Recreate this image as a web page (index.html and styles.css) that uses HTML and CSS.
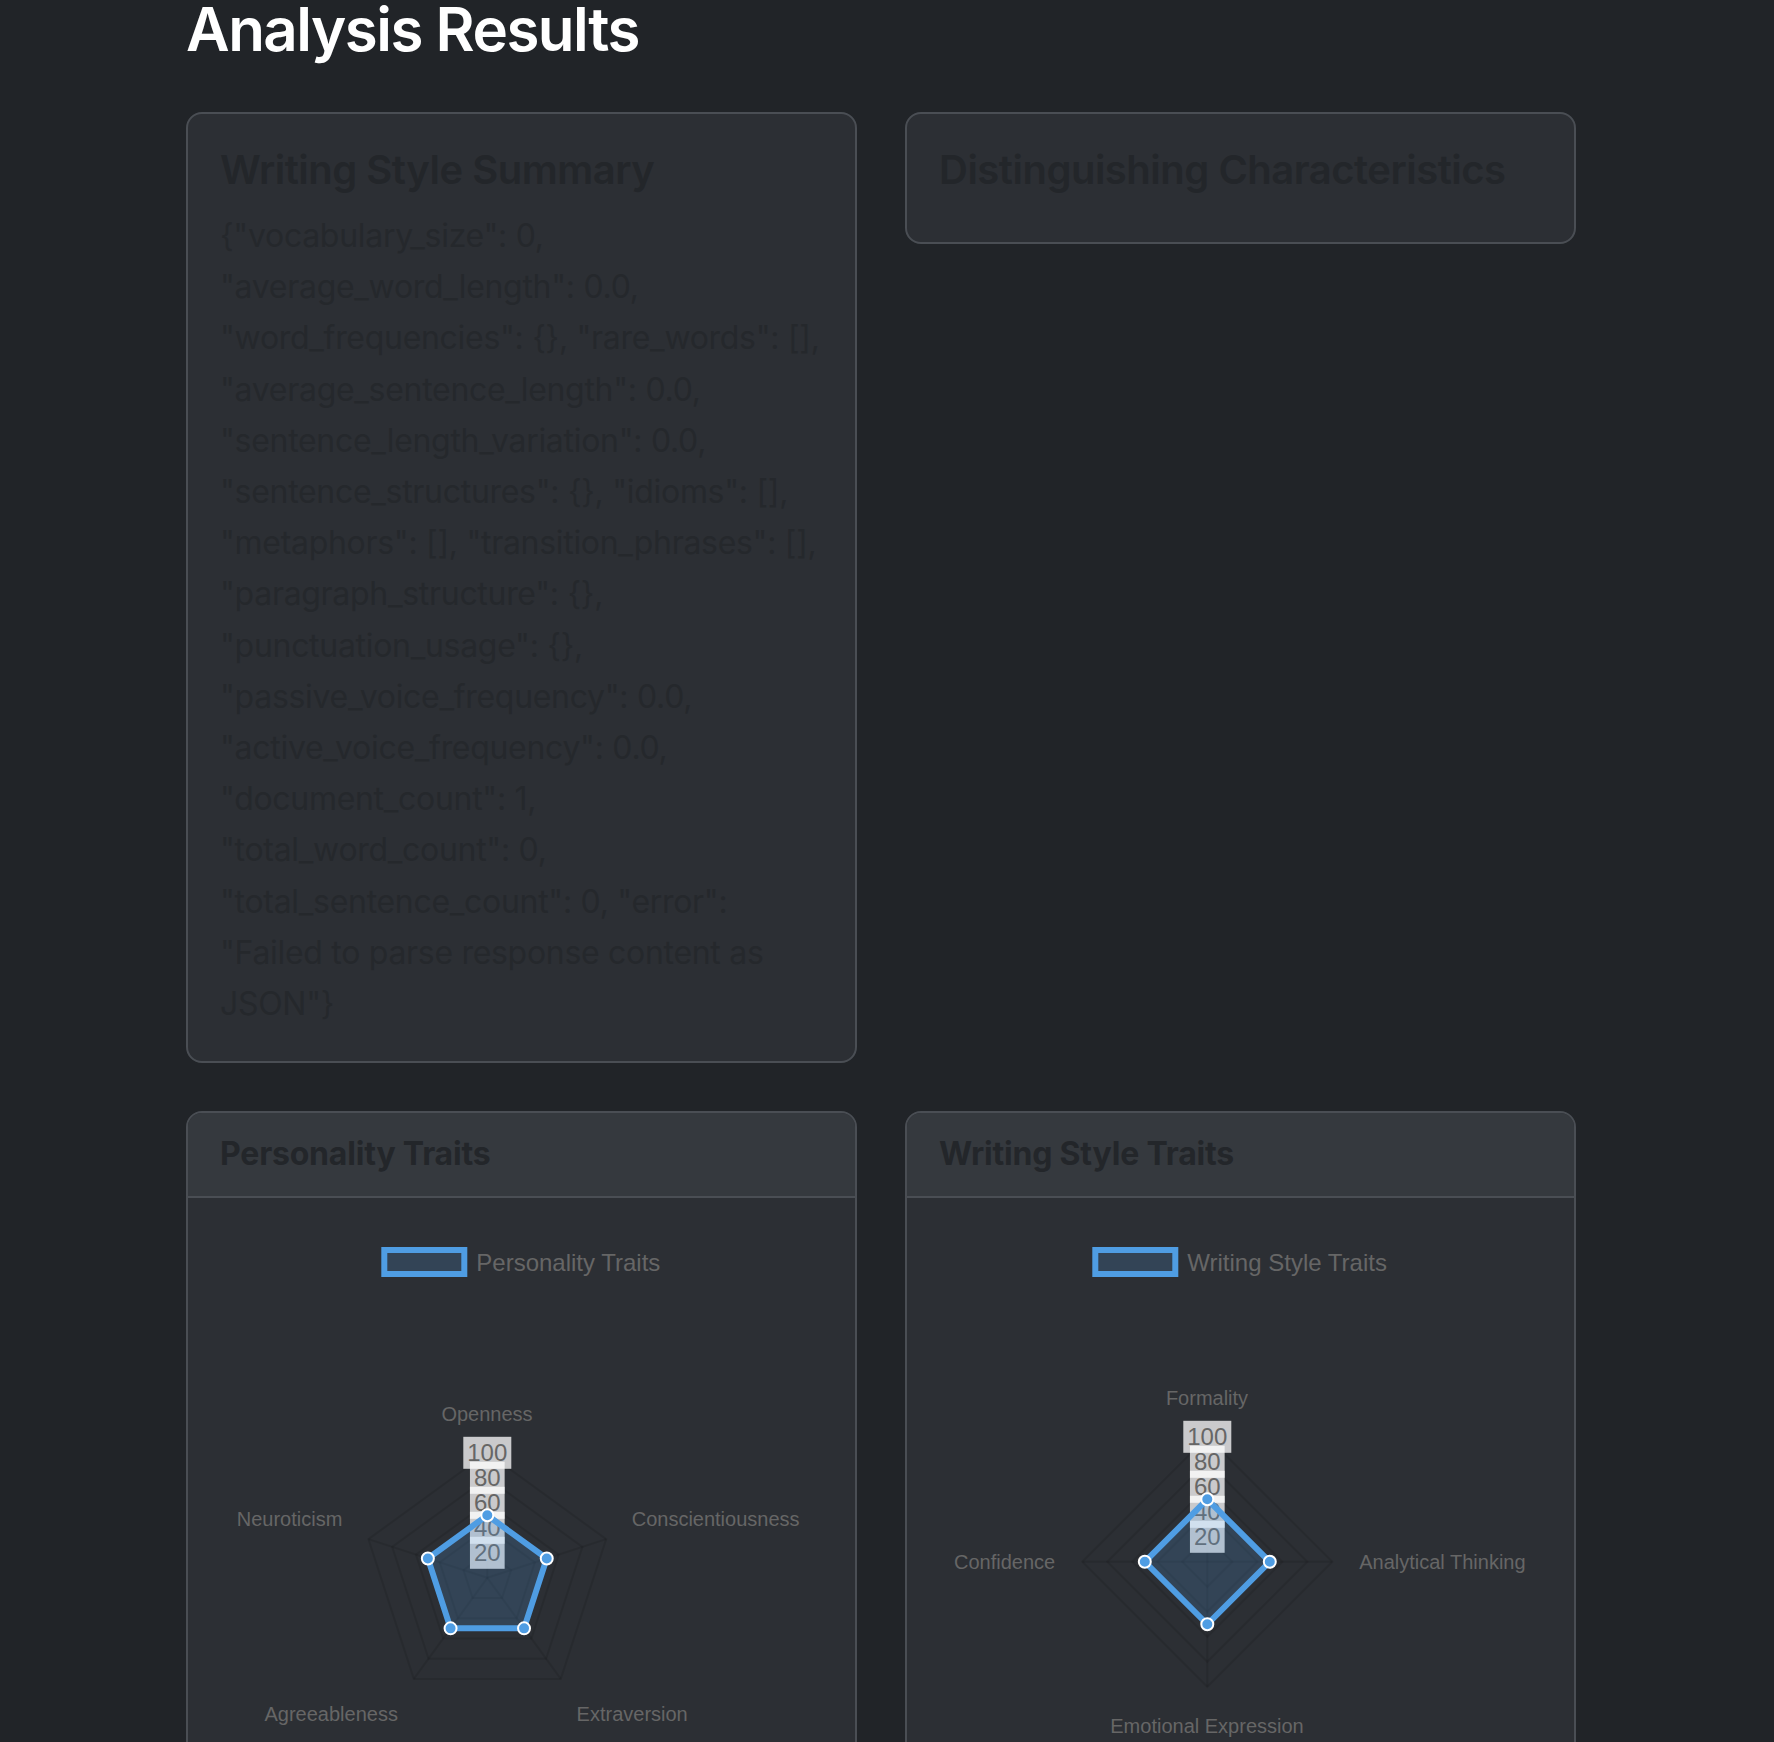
FILE: index.html
```html
<!DOCTYPE html>
<html lang="en">
<head>
<meta charset="utf-8">
<title>Analysis Results</title>
<link rel="stylesheet" href="styles.css">
</head>
<body>
<main class="page">
  <h2 class="page-title">Analysis Results</h2>

  <div class="grid">
    <section class="card">
      <div class="card-body">
        <h3 class="card-title">Writing Style Summary</h3>
        <p class="summary">{"vocabulary_size": 0,<br>"average_word_length": 0.0,<br>"word_frequencies": {}, "rare_words": [],<br>"average_sentence_length": 0.0,<br>"sentence_length_variation": 0.0,<br>"sentence_structures": {}, "idioms": [],<br>"metaphors": [], "transition_phrases": [],<br>"paragraph_structure": {},<br>"punctuation_usage": {},<br>"passive_voice_frequency": 0.0,<br>"active_voice_frequency": 0.0,<br>"document_count": 1,<br>"total_word_count": 0,<br>"total_sentence_count": 0, "error":<br>"Failed to parse response content as<br>JSON"}</p>
      </div>
    </section>

    <section class="card">
      <div class="card-body">
        <h3 class="card-title">Distinguishing Characteristics</h3>
      </div>
    </section>

    <section class="card">
      <header class="card-header"><h4 class="header-title">Personality Traits</h4></header>
      <div class="card-body chart-body">
        <svg class="chart" viewBox="0 0 603 603" width="603" height="603">
          <g class="legend">
            <rect class="legend-box" x="164.3" y="19" width="80" height="24"/>
            <text class="legend-text" x="256.3" y="31">Personality Traits</text>
          </g>
          <g class="grid-lines">
            <polygon points="267.3,321.8 291.08,339.07 282,367.03 252.6,367.03 243.52,339.07"/>
            <polygon points="267.3,296.8 314.85,331.35 296.69,387.25 237.91,387.25 219.75,331.35"/>
            <polygon points="267.3,271.8 338.63,323.62 311.38,407.48 223.22,407.48 195.97,323.62"/>
            <polygon points="267.3,246.8 362.41,315.9 326.08,427.7 208.52,427.7 172.19,315.9"/>
            <polygon points="267.3,221.8 386.18,308.17 340.77,447.93 193.83,447.93 148.42,308.17"/>
            <line x1="267.3" y1="346.8" x2="267.3" y2="221.8"/>
            <line x1="267.3" y1="346.8" x2="386.18" y2="308.17"/>
            <line x1="267.3" y1="346.8" x2="340.77" y2="447.93"/>
            <line x1="267.3" y1="346.8" x2="193.83" y2="447.93"/>
            <line x1="267.3" y1="346.8" x2="148.42" y2="308.17"/>
          </g>
          <g class="ticks">
            <rect x="249.95" y="305.8" width="34.7" height="32"/><text x="267.3" y="321.8">20</text>
            <rect x="249.95" y="280.8" width="34.7" height="32"/><text x="267.3" y="296.8">40</text>
            <rect x="249.95" y="255.8" width="34.7" height="32"/><text x="267.3" y="271.8">60</text>
            <rect x="249.95" y="230.8" width="34.7" height="32"/><text x="267.3" y="246.8">80</text>
            <rect x="243.3" y="205.8" width="48" height="32"/><text x="267.3" y="221.8">100</text>
          </g>
          <g class="point-labels">
            <text class="mid" x="267" y="182.8">Openness</text>
            <text class="start" x="411.7" y="288">Conscientiousness</text>
            <text class="start" x="356.6" y="482.5">Extraversion</text>
            <text class="end" x="177.9" y="482.5">Agreeableness</text>
            <text class="end" x="122.3" y="288">Neuroticism</text>
          </g>
          <polygon class="data" points="267.3,284.3 326.74,327.49 304.04,397.36 230.56,397.36 207.86,327.49"/>
          <g class="points">
            <circle cx="267.3" cy="284.3" r="6"/>
            <circle cx="326.74" cy="327.49" r="6"/>
            <circle cx="304.04" cy="397.36" r="6"/>
            <circle cx="230.56" cy="397.36" r="6"/>
            <circle cx="207.86" cy="327.49" r="6"/>
          </g>
        </svg>
      </div>
    </section>

    <section class="card">
      <header class="card-header"><h4 class="header-title">Writing Style Traits</h4></header>
      <div class="card-body chart-body">
        <svg class="chart" viewBox="0 0 603 603" width="603" height="603">
          <g class="legend">
            <rect class="legend-box" x="156.3" y="19" width="80" height="24"/>
            <text class="legend-text" x="248.3" y="31">Writing Style Traits</text>
          </g>
          <g class="grid-lines">
            <polygon points="268.3,305.8 293.3,330.8 268.3,355.8 243.3,330.8"/>
            <polygon points="268.3,280.8 318.3,330.8 268.3,380.8 218.3,330.8"/>
            <polygon points="268.3,255.8 343.3,330.8 268.3,405.8 193.3,330.8"/>
            <polygon points="268.3,230.8 368.3,330.8 268.3,430.8 168.3,330.8"/>
            <polygon points="268.3,205.8 393.3,330.8 268.3,455.8 143.3,330.8"/>
            <line x1="268.3" y1="330.8" x2="268.3" y2="205.8"/>
            <line x1="268.3" y1="330.8" x2="393.3" y2="330.8"/>
            <line x1="268.3" y1="330.8" x2="268.3" y2="455.8"/>
            <line x1="268.3" y1="330.8" x2="143.3" y2="330.8"/>
          </g>
          <g class="ticks">
            <rect x="250.95" y="289.8" width="34.7" height="32"/><text x="268.3" y="305.8">20</text>
            <rect x="250.95" y="264.8" width="34.7" height="32"/><text x="268.3" y="280.8">40</text>
            <rect x="250.95" y="239.8" width="34.7" height="32"/><text x="268.3" y="255.8">60</text>
            <rect x="250.95" y="214.8" width="34.7" height="32"/><text x="268.3" y="230.8">80</text>
            <rect x="244.3" y="189.8" width="48" height="32"/><text x="268.3" y="205.8">100</text>
          </g>
          <g class="point-labels">
            <text class="mid" x="268" y="167">Formality</text>
            <text class="start" x="420.2" y="331">Analytical Thinking</text>
            <text class="mid" x="268" y="495">Emotional Expression</text>
            <text class="end" x="116.2" y="331">Confidence</text>
          </g>
          <polygon class="data" points="268.3,268.3 330.8,330.8 268.3,393.3 205.8,330.8"/>
          <g class="points">
            <circle cx="268.3" cy="268.3" r="6"/>
            <circle cx="330.8" cy="330.8" r="6"/>
            <circle cx="268.3" cy="393.3" r="6"/>
            <circle cx="205.8" cy="330.8" r="6"/>
          </g>
        </svg>
      </div>
    </section>
  </div>
</main>
</body>
</html>
```

FILE: styles.css
```css
html, body {
  margin: 0;
  padding: 0;
}

body {
  background: #212428;
  font-family: Inter, "Noto Sans", sans-serif;
  color: #212529;
}

.page {
  width: 1390px;
  margin-left: 186px;
  padding-bottom: 40px;
}

.page-title {
  margin: 0 0 54px 0;
  font-size: 60px;
  line-height: 58px;
  font-weight: 600;
  color: #ffffff;
  letter-spacing: -1.5px;
}

.grid {
  display: grid;
  grid-template-columns: 671px 671px;
  column-gap: 48px;
  row-gap: 48px;
  align-items: start;
}

.card {
  background: #2c2f34;
  border: 2px solid #4a4e54;
  border-radius: 16px;
  overflow: hidden;
}

.card-body {
  padding: 32px;
}

.chart-body {
  padding-top: 33px;
}

.card-title {
  margin: 0 0 16px 0;
  font-size: 40px;
  line-height: 48px;
  font-weight: 600;
  color: #23262a;
  letter-spacing: -0.5px;
}

.summary {
  margin: 0;
  font-size: 32px;
  line-height: 51.2px;
  font-weight: 400;
  color: #25282c;
  white-space: nowrap;
  letter-spacing: -0.3px;
}

.card-header {
  background: #35393e;
  border-bottom: 2px solid #4a4e54;
  padding: 17px 32px 18px 32px;
}

.header-title {
  margin: 0;
  font-size: 32px;
  line-height: 48px;
  font-weight: 700;
  color: #23262a;
  letter-spacing: -0.2px;
}

.chart {
  display: block;
  font-family: "Liberation Sans", Arial, sans-serif;
}

.legend-box {
  fill: rgba(79, 157, 227, 0.2);
  stroke: #4f9de3;
  stroke-width: 6;
}

.legend-text {
  font-size: 24px;
  fill: #666666;
  dominant-baseline: central;
}

.grid-lines polygon,
.grid-lines line {
  fill: none;
  stroke: rgba(0, 0, 0, 0.1);
  stroke-width: 2;
}

.ticks rect {
  fill: rgba(255, 255, 255, 0.75);
}

.ticks text {
  font-size: 24px;
  fill: #666666;
  text-anchor: middle;
  dominant-baseline: central;
}

.point-labels text {
  font-size: 20px;
  fill: #666666;
  dominant-baseline: central;
}

.point-labels .mid { text-anchor: middle; }
.point-labels .start { text-anchor: start; }
.point-labels .end { text-anchor: end; }

.data {
  fill: rgba(79, 157, 227, 0.2);
  stroke: #4f9de3;
  stroke-width: 6;
  stroke-linejoin: miter;
}

.points circle {
  fill: #4f9de3;
  stroke: #ffffff;
  stroke-width: 2;
}
```
